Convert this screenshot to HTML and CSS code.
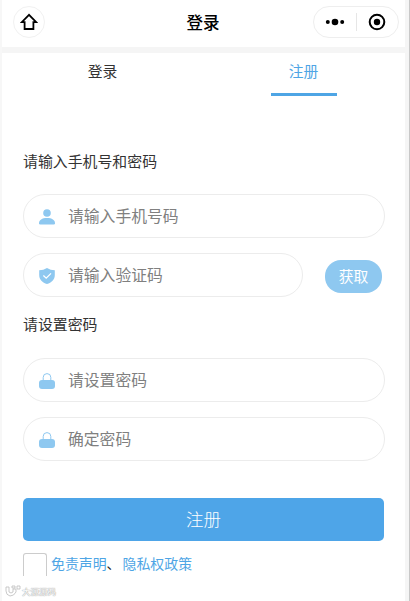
FILE: index.html
```html
<!DOCTYPE html>
<html lang="zh-CN">
	<head>
		<meta charset="UTF-8">
		<title>注册</title>
		<link rel="stylesheet" href="styles.css">
	</head>
	<body>
		<div id="con">
			<div class="head">
				<a class="home" href="#">
					<svg width="18" height="18" viewBox="0 0 18 18"><path d="M9 1.8L1.8 9.2H4.6V16H13.4V9.2H16.2Z" fill="none" stroke="#000" stroke-width="1.8"/></svg>
				</a>
				<h1>登录</h1>
				<div class="capsule">
					<svg width="20" height="10" viewBox="0 0 20 10"><circle cx="2.8" cy="5" r="2"/><circle cx="10" cy="5" r="3.3"/><circle cx="17.2" cy="5" r="2"/></svg>
					<i></i>
					<svg width="18" height="18" viewBox="0 0 18 18"><circle cx="9" cy="9" r="7.3" fill="none" stroke="#000" stroke-width="2"/><circle cx="9" cy="9" r="3.2"/></svg>
				</div>
			</div>
			<div class="tab">
				<a href="#"><span>登录</span></a>
				<a class="active" href="#"><span>注册</span></a>
			</div>
			<div class="form">
				<p class="tit">请输入手机号和密码</p>
				<label class="txt">
					<svg width="16" height="16" viewBox="0 0 16 16"><circle cx="8" cy="4" r="3.8"/><path d="M0 14.2C0 11 3 9 8 9S16 11 16 14.2Q16 15.4 14.8 15.4H1.2Q0 15.4 0 14.2Z"/></svg>
					<input type="text" placeholder="请输入手机号码"/>
				</label>
				<div class="code">
					<label class="txt">
						<svg width="16" height="16" viewBox="0 0 16 16"><path d="M8 0Q11.5 2.2 15.8 2.3V7C15.8 11.6 12.5 14.8 8 16C3.5 14.8 .2 11.6 .2 7V2.3Q4.5 2.2 8 0Z"/><path class="tick" d="M4.4 7.6L7.2 10.2L12 5.4"/></svg>
						<input type="text" placeholder="请输入验证码"/>
					</label>
					<button type="button">获取</button>
				</div>
				<p class="tit tit2">请设置密码</p>
				<label class="txt">
					<svg width="16" height="16" viewBox="0 0 16 16"><path class="ring" d="M4.2 8V4.4a3.8 3.8 0 0 1 7.6 0V8"/><rect y="7" width="16" height="9" rx="3"/></svg>
					<input type="text" placeholder="请设置密码"/>
				</label>
				<label class="txt">
					<svg width="16" height="16" viewBox="0 0 16 16"><path class="ring" d="M4.2 8V4.4a3.8 3.8 0 0 1 7.6 0V8"/><rect y="7" width="16" height="9" rx="3"/></svg>
					<input type="text" placeholder="确定密码"/>
				</label>
				<input class="commit" type="button" value="注册"/>
				<div class="agree">
					<span class="check"></span>
					<a href="#">免责声明</a><em>、</em><a href="#">隐私权政策</a>
				</div>
			</div>
			<div class="mark">
				<svg width="16" height="12" viewBox="0 0 16 12"><path d="M1 2H4V7Q6 9 8 7V4H11V7Q9 11 5 11Q1 10 1 6ZM7 1H10V3H7ZM12 1H15V4H12Z"/></svg>
				<span>大源源码</span>
			</div>
		</div>
	</body>
</html>
```
FILE: styles.css
```css
*{margin: 0;padding: 0;box-sizing: border-box;}
body{
	font-family: "Noto Sans CJK SC", sans-serif;
	background: #fff;
	overflow: hidden;
}
a{text-decoration: none;}
input,button{border: 0;outline: none;font-family: inherit;}
#con{
	width: 410px;
	height: 601px;
	border-left: 2px solid #f7f7f7;
	border-right: 1px solid #c8c8c8;
	box-shadow: inset -4px 0 #f5f5f5;
}
.head{
	height: 53px;
	padding: 6px 10px 0 11px;
	border-bottom: 6px solid #f5f5f5;
	display: grid;
	grid-template-columns: 80px 1fr 86px;
	align-items: start;
}
.home{
	width: 32px;
	height: 32px;
	border: 1px solid #f1f1f1;
	border-radius: 50%;
	display: flex;
	align-items: center;
	justify-content: center;
}
.head h1{
	line-height: 32px;
	text-align: center;
	font-size: 16.5px;
	font-weight: 500;
	color: #000;
}
.capsule{
	width: 86px;
	height: 32px;
	border: 1px solid #eee;
	border-radius: 16px;
	display: flex;
	align-items: center;
	justify-content: space-between;
	padding: 0 12px 0 11px;
}
.capsule i{
	width: 1px;
	height: 18px;
	background: #e6e6e6;
}
.tab{
	height: 43px;
	display: flex;
}
.tab a{
	width: 201px;
	display: flex;
	justify-content: center;
	font-size: 14.8px;
	line-height: 36px;
	color: #333;
}
.tab span{
	width: 66px;
	height: 43px;
	text-align: center;
}
.tab .active{
	color: #4ea5e5;
}
.tab .active span{
	position: relative;
	border-bottom: 3px solid #4ea5e5;
}
.form{
	padding: 54px 22px 0 21px;
}
.tit{
	font-size: 14.9px;
	line-height: 21px;
	margin-bottom: 23px;
	color: #333;
}
.tit2{
	line-height: 23px;
}
.txt{
	width: 362px;
	height: 44px;
	margin-bottom: 15px;
	padding-left: 15px;
	border: 1px solid #ececec;
	border-radius: 22px;
	display: flex;
	align-items: center;
}
.txt svg{
	margin: 2px 13px 0 0;
	fill: #8ec8f0;
}
.txt .tick{
	fill: none;
	stroke: #fff;
	stroke-width: 1.3;
}
.txt .ring{
	fill: none;
	stroke: #8ec8f0;
	stroke-width: 1;
}
.txt input{
	width: 200px;
	height: 40px;
	padding-bottom: 1px;
	font-size: 15.8px;
	background: none;
}
.txt input::placeholder{color: #808080;}
.code{
	display: flex;
}
.code .txt{
	width: 280px;
}
.code button{
	width: 57px;
	height: 33px;
	margin: 7px 0 0 22px;
	padding-bottom: 3px;
	border-radius: 16px;
	background: #8ec8f0;
	color: #fff;
	font-size: 14.8px;
}
.commit{
	display: block;
	width: 361px;
	height: 43px;
	margin-top: 37px;
	padding-bottom: 2px;
	border-radius: 5px;
	background: #4ea5e8;
	color: #fff;
	font-size: 17.5px;
	font-weight: 300;
}
.agree{
	display: flex;
	height: 23px;
	margin-top: 12px;
	font-size: 13.9px;
	line-height: 21px;
}
.check{
	width: 24px;
	height: 23px;
	margin-right: 4px;
	border: 1px solid #ccc;
	border-bottom: 0;
	border-radius: 3px 3px 0 0;
}
.agree a{color: #4ea5e5;}
.agree em{
	width: 16px;
	font-style: normal;
	color: #222;
}
.mark{
	display: flex;
	align-items: center;
	gap: 1px;
	height: 14px;
	margin: 8px 0 0 3px;
	font-size: 8.5px;
	color: #fff;
	text-shadow: 0 0 1px #999, 0 0 1px #999;
}
.mark svg{
	fill: #fff;
	stroke: #bbb;
	stroke-width: .8;
}
```
